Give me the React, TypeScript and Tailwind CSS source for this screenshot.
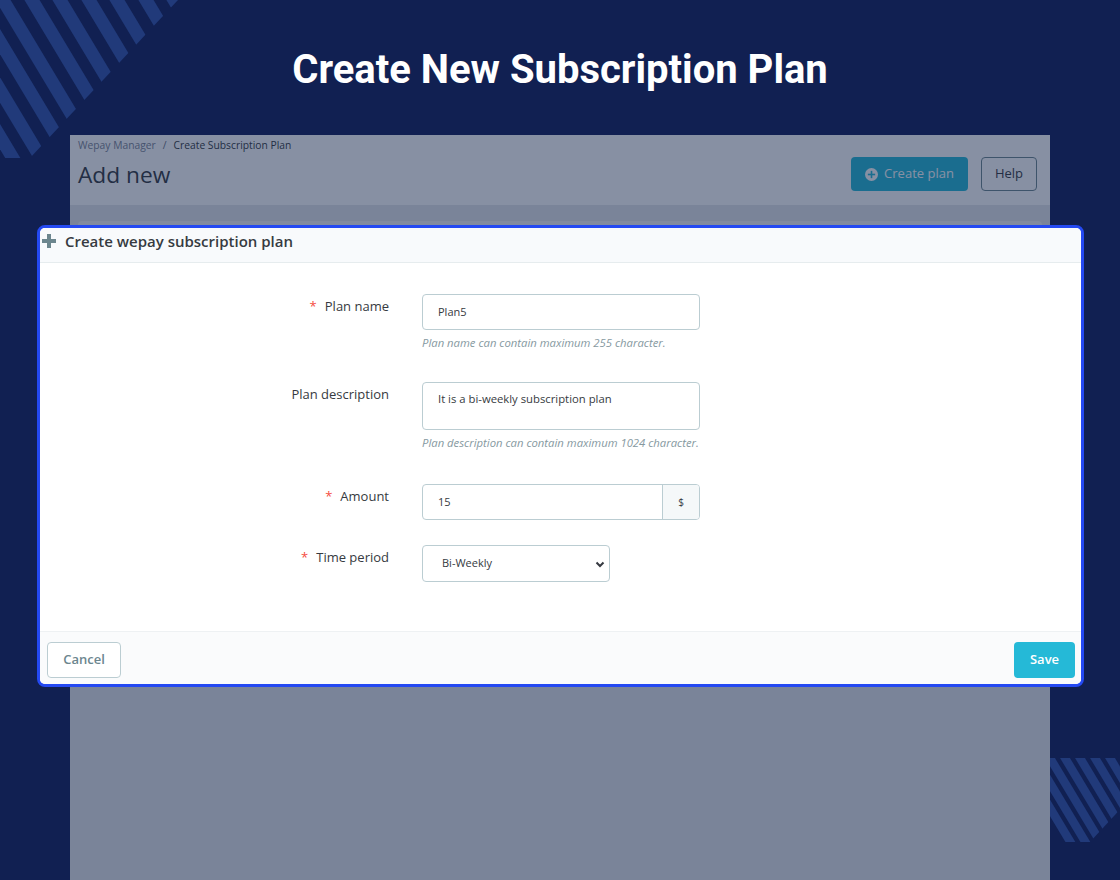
function Stripes({ className, clip, lines, width }: { className: string; clip: string; lines: number[]; width: number }) {
  return (
    <svg className={className} viewBox="0 0 200 200" preserveAspectRatio="none">
      <defs>
        <clipPath id={`c-${clip.length}-${lines[0]}`}>
          <polygon points={clip} />
        </clipPath>
      </defs>
      <g clipPath={`url(#c-${clip.length}-${lines[0]})`} stroke="#213a7a" strokeWidth={width}>
        {lines.map((x) => (
          <line key={x} x1={x - 12} y1={-20} x2={x + 132} y2={220} />
        ))}
      </g>
    </svg>
  );
}

function Field({
  label,
  required,
  help,
  children,
}: {
  label: string;
  required?: boolean;
  help?: string;
  children: React.ReactNode;
}) {
  return (
    <div className="flex">
      <div className="w-[349px] pt-[4px] pr-0 text-right text-[13px] leading-[16px] text-[#363a41]">
        {required && <span className="mr-[8px] text-[#f54c3e]">*</span>}
        {label}
      </div>
      <div className="ml-[33px]">
        {children}
        {help && (
          <p className="mt-[6px] text-[11.3px] italic leading-[14px] text-[#86999f]">{help}</p>
        )}
      </div>
    </div>
  );
}

export default function App() {
  return (
    <div
      className="relative h-[880px] w-[1120px] overflow-hidden bg-[#112052]"
      style={{ fontFamily: '"Open Sans", sans-serif' }}
    >
      <Stripes
        className="absolute left-0 top-0 h-[200px] w-[200px]"
        clip="0,0 178,0 30,158 0,158"
        lines={[-82, -54, -25, 3, 32, 60, 89, 117, 146, 174]}
        width={13}
      />
      <Stripes
        className="absolute left-[1040px] top-[758px] h-[100px] w-[100px]"
        clip="0,0 200,0 200,60 100,168 0,168"
        lines={[-40, -10, 20, 50, 80, 110, 140, 170]}
        width={17}
      />

      <h1
        className="pt-[45px] text-center text-[40px] font-bold leading-[50px] text-white"
        style={{ fontFamily: 'Roboto, sans-serif' }}
      >
        Create New Subscription Plan
      </h1>

      {/* page behind the modal */}
      <div className="relative mx-[70px] mt-[40px] h-[745px] bg-[#e4e6ea]">
        <div className="flex items-start justify-between bg-white pl-[8px] pr-[13px] pb-[14px]">
          <div>
            <div className="pt-[3px] text-[10.3px] leading-[14px]">
              <span className="text-[#7d8595]">Wepay Manager</span>
              <span className="mx-[7px] text-[#6c7585]">/</span>
              <span className="text-[#363a41]">Create Subscription Plan</span>
            </div>
            <div className="mt-[7px] text-[22.7px] leading-[32px] text-[#363a41]">Add new</div>
          </div>
          <div className="mt-[22px] flex gap-[13px]">
            <div className="flex h-[34px] w-[117px] items-center justify-center gap-[6px] rounded-[4px] bg-[#25b9d7] text-[13px] font-medium text-white">
              <svg width="13" height="13" viewBox="0 0 16 16">
                <circle cx="8" cy="8" r="8" fill="white" />
                <rect x="7" y="3.5" width="2" height="9" fill="#25b9d7" />
                <rect x="3.5" y="7" width="9" height="2" fill="#25b9d7" />
              </svg>
              Create plan
            </div>
            <div className="flex h-[34px] w-[56px] items-center justify-center rounded-[4px] border border-[#6c868e] bg-white text-[13px] font-medium text-[#363a41]">
              Help
            </div>
          </div>
        </div>
        <div className="mx-[8px] mt-[16px] h-[40px] rounded-t-[4px] bg-[#f4f5f6]" />
        <div className="absolute inset-0 bg-[#0f2148]/50" />
      </div>

      {/* modal */}
      <div className="absolute left-[37px] top-[225px] flex h-[462px] w-[1047px] flex-col overflow-hidden rounded-[8px] border-[3px] border-[#2449f2] bg-white">
        <div className="flex h-[35px] items-start gap-[9px] border-b border-[#e6ecee] bg-[#f8fafc] pl-[2px] pt-[3px]">
          <svg className="mt-[3px]" width="14" height="14" viewBox="0 0 14 14" fill="#6c868e">
            <rect x="5" y="0" width="4" height="14" />
            <rect x="0" y="5" width="14" height="4" />
          </svg>
          <span className="text-[15px] font-semibold leading-[20px] text-[#363a41]">
            Create wepay subscription plan
          </span>
        </div>

        <div className="flex-1 pt-[31px]">
          <Field label="Plan name" required help="Plan name can contain maximum 255 character.">
            <div className="flex h-[36px] w-[278px] items-center rounded-[4px] border border-[#bbcdd2] px-[15px] text-[11px] text-[#363a41]">
              Plan5
            </div>
          </Field>
          <div className="mt-[32px]">
            <Field label="Plan description" help="Plan description can contain maximum 1024 character.">
              <div className="h-[48px] w-[278px] rounded-[4px] border border-[#bbcdd2] px-[15px] pt-[8px] text-[11.3px] leading-[15px] text-[#363a41]">
                It is a bi-weekly subscription plan
              </div>
            </Field>
          </div>
          <div className="mt-[34px]">
            <Field label="Amount" required>
              <div className="flex h-[36px] w-[278px] overflow-hidden rounded-[4px] border border-[#bbcdd2] text-[#363a41]">
                <div className="flex flex-1 items-center px-[15px] text-[11px]">15</div>
                <div className="flex w-[37px] items-center justify-center border-l border-[#bbcdd2] bg-[#f5f8f9] text-[10px]">
                  $
                </div>
              </div>
            </Field>
          </div>
          <div className="mt-[25px]">
            <Field label="Time period" required>
              <div className="flex h-[37px] w-[188px] items-center justify-between rounded-[4px] border border-[#bbcdd2] pl-[19px] pr-[4px] text-[11px] text-[#363a41]">
                Bi-Weekly
                <svg width="10" height="10" viewBox="0 0 10 10" fill="none" stroke="#363a41" strokeWidth="2">
                  <path d="M1.5 3.5 L5 7 L8.5 3.5" />
                </svg>
              </div>
            </Field>
          </div>
        </div>

        <div className="flex h-[53px] items-start justify-between border-t border-[#eef1f3] bg-[#fafbfc] pl-[7px] pr-[6px] pt-[10px]">
          <div className="flex h-[36px] w-[74px] items-center justify-center rounded-[4px] border border-[#bbcdd2] bg-white text-[13px] font-semibold text-[#6c868e]">
            Cancel
          </div>
          <div className="flex h-[36px] w-[61px] items-center justify-center rounded-[4px] bg-[#25b9d7] text-[13px] font-semibold text-white">
            Save
          </div>
        </div>
      </div>
    </div>
  );
}
